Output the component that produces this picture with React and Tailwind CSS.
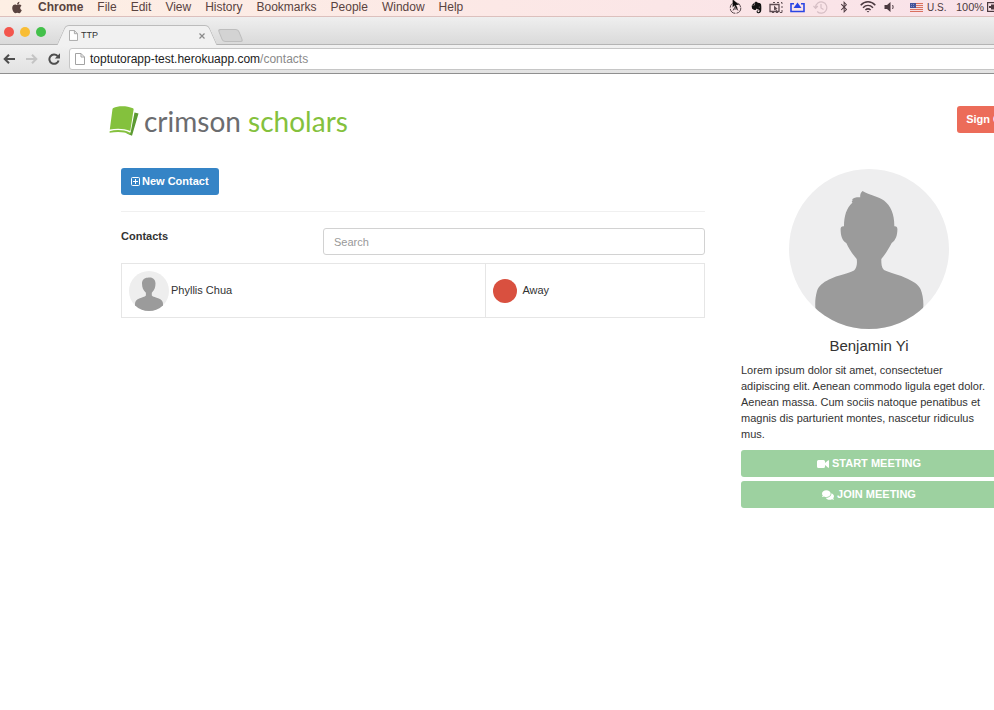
import React from "react";
import { FaApple, FaBluetoothB, FaComments, FaEvernote } from "react-icons/fa";

const menus = ["File", "Edit", "View", "History", "Bookmarks", "People", "Window", "Help"];

function FlagIcon() {
  return (
    <svg viewBox="0 0 13 9" className="h-[9px] w-[13px]" aria-hidden="true">
      <rect width="13" height="9" fill="#f4dfe2" />
      <path d="M0 .5h13M0 2.5h13M0 4.5h13M0 6.5h13M0 8.5h13" stroke="#d9705f" />
      <rect width="6" height="5" fill="#45549a" />
      <path d="M1 1.5h4M1 3.5h4" stroke="#8790c0" strokeDasharray="1 1" />
    </svg>
  );
}

function StatusIcons() {
  return (
    <div className="-mr-[9px] ml-auto flex shrink-0 items-center text-[#4c3a40]">
      <div className="relative mr-2 h-[13px] w-[13px]">
        <svg viewBox="0 0 13 13" className="h-[13px] w-[13px]" fill="none" stroke="#57474c" aria-hidden="true">
          <circle cx="6.5" cy="7" r="5.3" strokeDasharray="7 1.3" />
          <path d="M4 9.5 6.5 5 9 9.500M5 8h3" />
        </svg>
        <svg viewBox="0 0 8 11" className="absolute -top-[2px] left-[3px] h-[11px] w-2" aria-hidden="true">
          <path d="M.5 0v8.500l2-1.800 1.500 3.500 1.700-.8-1.500-3.300H7.500z" fill="#0b0b0b" stroke="#f8e4e8" strokeWidth=".3" />
        </svg>
      </div>
      <FaEvernote className="mr-[6px] h-[13px] w-[13px] text-[#111]" />
      <svg viewBox="0 0 14 13" className="mr-[7px] h-[13px] w-[14px]" fill="none" stroke="#5d4c52" aria-hidden="true">
        <path d="M4 1.500h2M8 1.500h2M12 1.500h1V3M13 5v2M13 9v2.500h-2M9 11.500H7M5 11.500H3" />
        <path d="M1 3.500h9v7H1z" strokeWidth="1.300" />
        <path d="M5 4.500v5l1.200-1.100 1 1.900.9-.4-1-1.900h1.600z" fill="#5d4c52" stroke="none" />
      </svg>
      <svg viewBox="0 0 15 12" className="mr-2 h-3 w-[15px]" aria-hidden="true">
        <path d="M4 2.800H1v7.700h13V2.800h-3" fill="none" stroke="#2b45e4" strokeWidth="1.600" />
        <path d="M7.500 1.500 11.500 7h-8z" fill="#2b45e4" />
      </svg>
      <svg viewBox="0 0 15 13" className="mr-3 h-[13px] w-[15px]" fill="none" stroke="#d6bfc5" strokeWidth="1.200" aria-hidden="true">
        <path d="M2.600 6.500a5.600 5.600 0 1 1 1.600 4M.5 5l2.100 2.300L4.800 5M8 3v4l2.500 1.500" />
      </svg>
      <FaBluetoothB className="mr-3 h-3 w-2" />
      <svg viewBox="0 0 16 12" className="mr-2 h-3 w-4" fill="none" stroke="#4c3a40" strokeWidth="1.500" aria-hidden="true">
        <path d="M.7 4.200C5-.4 11-.4 15.300 4.200M3 6.700c3-3 7-3 10 0M5.400 9c1.700-1.500 3.500-1.500 5.200 0" />
        <path d="m6.700 10 1.300 1.500L9.300 10z" fill="#4c3a40" stroke="none" />
      </svg>
      <svg viewBox="0 0 12 12" className="mr-[14px] h-3 w-3" aria-hidden="true">
        <path d="M.5 4v4H3l3.500 3V1L3 4z" fill="#4c3a40" />
        <path d="M8.500 4c.8 1.200.8 2.800 0 4" fill="none" stroke="#4c3a40" />
      </svg>
      <FlagIcon />
      <span className="ml-1 w-[29px] text-[10px]">U.S.</span>
      <span className="w-[31px] text-[11px]">100%</span>
      <svg viewBox="0 0 16 10" className="h-[10px] w-4" aria-hidden="true">
        <rect x=".6" y=".6" width="14" height="8.800" fill="none" stroke="#4c3a40" strokeWidth="1.200" />
        <path d="M2 4h2V2.500h3v5H4V6H2z" fill="#4c3a40" />
      </svg>
    </div>
  );
}

function PageIcon({ className }) {
  return (
    <svg viewBox="0 0 10 12" className={className} fill="#fff" stroke="#a3a3a3" aria-hidden="true">
      <path d="M.5.5h5.500l3.500 3.500v7.500h-9zM6 .5V4h3.500" />
    </svg>
  );
}

function MenuBar() {
  return (
    <nav className="flex h-[17px] items-center overflow-hidden border-b border-[#dcc0bd] bg-linear-to-r from-[#fdefe4] via-[#fce8e6] to-[#f9e2e9] pb-[2px] pl-[11px] text-[12px] text-[#59433f]">
      <FaApple className="mr-[15px] h-[13px] w-3 shrink-0" />
      <div className="flex gap-[14px]">
        <span className="font-bold">Chrome</span>
        {menus.map((m) => (
          <span key={m}>{m}</span>
        ))}
      </div>
      <StatusIcons />
    </nav>
  );
}

function TabStrip() {
  return (
    <div className="flex h-7 items-end border-b border-[#b4b4b4] bg-linear-to-b from-[#efefef] to-[#dadada] pl-1">
      <div className="flex gap-[6px] self-start pt-[10px]">
        <span className="h-[10px] w-[10px] rounded-full bg-[#f3564d]" />
        <span className="h-[10px] w-[10px] rounded-full bg-[#f8bd35]" />
        <span className="h-[10px] w-[10px] rounded-full bg-[#43c04a]" />
      </div>
      <div className="relative -mb-px ml-[15px] flex h-5 w-[152px] px-2 before:absolute before:inset-y-0 before:left-0 before:w-1/2 before:-skew-x-[24deg] before:rounded-tl-[4px] before:border-t before:border-l before:border-[#bcbcbc] before:bg-[#f1f1f1] after:absolute after:inset-y-0 after:right-0 after:w-1/2 after:skew-x-[24deg] after:rounded-tr-[4px] after:border-t after:border-r after:border-[#bcbcbc] after:bg-[#f1f1f1]">
        <div className="relative z-10 flex flex-1 items-center border-t border-[#bcbcbc] bg-[#f1f1f1]">
          <PageIcon className="h-[11px] w-[9px]" />
          <span className="ml-[3px] text-[9px] text-[#333]">TTP</span>
          <button type="button" aria-label="Close tab" className="ml-auto">
            <svg viewBox="0 0 6 6" className="h-[6px] w-[6px]" stroke="#8a8a8a" strokeWidth="1.200" aria-hidden="true">
              <path d="m.5.5 5 5M5.500.5l-5 5" />
            </svg>
          </button>
        </div>
      </div>
      <button
        type="button"
        aria-label="New tab"
        className="mb-[2px] ml-[7px] h-[13px] w-[21px] skew-x-[22deg] rounded-[3px] border border-[#bdbdbd] bg-[#d3d3d3]"
      />
    </div>
  );
}

function Toolbar() {
  return (
    <div className="flex h-[29px] items-center overflow-hidden border-b border-[#8f8f8f] bg-linear-to-b from-[#f1f1f1] to-[#e2e2e2] pl-[3px]">
      <button type="button" aria-label="Back">
        <svg viewBox="0 0 12 10" className="h-[10px] w-3" fill="none" stroke="#4e4e4e" strokeWidth="2" aria-hidden="true">
          <path d="M12 5H2M6 .8 1.700 5 6 9.200" />
        </svg>
      </button>
      <button type="button" aria-label="Forward" className="ml-[11px]">
        <svg viewBox="0 0 12 10" className="h-[10px] w-3" fill="none" stroke="#c4c4c4" strokeWidth="2" aria-hidden="true">
          <path d="M0 5h10M6 .8 10.300 5 6 9.200" />
        </svg>
      </button>
      <button type="button" aria-label="Reload" className="ml-[10px]">
        <svg viewBox="0 0 12 12" className="h-3 w-3" aria-hidden="true">
          <path d="M9.600 3A4.700 4.700 0 1 0 10.600 7.500" fill="none" stroke="#4e4e4e" strokeWidth="2" />
          <path d="M12 .3v5.200H6.800z" fill="#4e4e4e" />
        </svg>
      </button>
      <div className="-mr-1 ml-[9px] flex h-[22px] flex-1 items-center rounded-[3px] border border-[#c6c6c6] bg-white pl-[5px]">
        <PageIcon className="h-3 w-[10px]" />
        <span className="ml-[5px] text-[12px] text-[#8a8a8a]">
          <span className="text-[#222]">toptutorapp-test.herokuapp.com</span>/contacts
        </span>
      </div>
    </div>
  );
}

function Logo() {
  return (
    <a href="#home" className="flex items-center" aria-label="crimson scholars">
      <svg viewBox="0 0 30 30" className="h-[30px] w-[30px]" aria-hidden="true">
        <path d="M25.500 6.500 29.500 7.500 23 29.800 17 27.300 21.500 27z" fill="#5c9a33" />
        <path d="M4.300 1.900C9-.3 18-.4 24 2.300c.5.3.7.7.6 1.200L21.300 25C15 22.300 7 22.300.8 23.600L3.500 3c.1-.6.300-.9.800-1.100z" fill="#84c13d" />
        <path d="M.6 25.200c6.500-1.700 14-1.500 20 1.200l1.400-.5-1 2.500C15 25.500 8 25.500.6 26.700z" fill="#84c13d" />
      </svg>
      <span className="ml-[5px] font-['Lato',sans-serif] text-[28px] leading-[30px] font-normal whitespace-nowrap text-[#6b6c6f]">
        crimson <span className="text-[#84c13d]">scholars</span>
      </span>
    </a>
  );
}

function SmallAvatar() {
  return (
    <svg viewBox="0 0 40 40" className="h-10 w-10 shrink-0" role="img" aria-label="Phyllis Chua">
      <defs>
        <clipPath id="small-round"><circle cx="20" cy="20" r="20" /></clipPath>
      </defs>
      <g clipPath="url(#small-round)">
        <rect width="40" height="40" fill="#eeeeee" />
        <path d="M18.500 6.800c4.500-1.400 8 1.200 8 5.700 0 4-1.200 6.800-3.700 9.300v2.700c1.200 1.500 4 1.700 7 2.900 3 1.200 4.200 3 4.200 5.300v7.300H6v-7.300c0-2.300 1.200-4.100 4.200-5.300 3-1.200 5.500-1.400 6.700-2.900v-2.700c-2.700-2.500-3.900-5.300-3.900-9.300 0-3 2-5.700 5.500-5.700z" fill="#9b9b9b" />
      </g>
    </svg>
  );
}

function ProfileAvatar() {
  return (
    <svg viewBox="0 0 160 160" className="h-40 w-40" role="img" aria-label="Benjamin Yi">
      <defs>
        <clipPath id="large-round"><circle cx="80" cy="80" r="80" /></clipPath>
      </defs>
      <g clipPath="url(#large-round)">
        <rect width="160" height="160" fill="#eeeeef" />
        <path
          d="M73.500 22C71.500 24 71 26 71.200 28.200C68 28 64.500 28.500 63 30.500L64 31C62.500 32 62.500 33 63.500 33.500C57.500 39 55 47 55 57.200C52.500 57 51.500 58 51.600 60.500C51.700 66 53 72 57.300 74C60 80 63.500 85 67.700 90C68.500 95 67.500 99 65 101.500C60 104.500 49 106 40 110.500C34 113.500 29.500 117 28 122C26 129 26 135 26.500 141V160H134V141C135 134 134 126 131.500 120C129 115 124 112.500 119 110C110 105.500 101 104 95 101C92.500 98.500 92.300 95 92.300 90C96.500 85 99.500 80 102.700 74C107 71 108.300 66 108.400 60.500C108.500 58 107.500 57 105.300 57.200C105.500 46 102 37 95 31.500C88.500 27 81 26.500 73.500 22Z"
          fill="#9b9b9b"
        />
      </g>
    </svg>
  );
}

function ContactsPanel() {
  return (
    <section>
      <button type="button" className="flex h-[27px] items-center rounded-[3px] bg-[#3584c6] px-[10px] text-[11px] font-bold text-white">
        <svg viewBox="0 0 9 9" className="mr-[2px] h-[9px] w-[9px]" fill="none" stroke="#fff" aria-hidden="true">
          <rect x=".5" y=".5" width="8" height="8" rx="1" />
          <path d="M4.500 2v5M2 4.500h5" />
        </svg>
        New Contact
      </button>
      <hr className="mt-4 border-[#f0f0f0]" />
      <div className="mt-4 grid grid-cols-[202px_1fr]">
        <label htmlFor="search" className="font-bold leading-4">Contacts</label>
        <input
          id="search"
          type="text"
          placeholder="Search"
          className="h-[27px] w-full rounded-[3px] border border-[#d2d2d2] px-[10px] text-[11px] placeholder:text-[#999]"
        />
      </div>
      <table className="mt-2 w-full table-fixed border-collapse border border-[#e6e6e6]">
        <tbody>
          <tr className="h-[54px]">
            <td className="w-5/8 border border-[#e6e6e6] py-[6px] pl-[7px]">
              <div className="flex items-center gap-[2px]">
                <SmallAvatar />
                Phyllis Chua
              </div>
            </td>
            <td className="border border-[#e6e6e6] pl-[7px]">
              <div className="flex items-center gap-[5px]">
                <span className="h-6 w-6 rounded-full bg-[#d9503f]" />
                Away
              </div>
            </td>
          </tr>
        </tbody>
      </table>
    </section>
  );
}

function Profile() {
  return (
    <aside>
      <div className="flex justify-center pt-px">
        <ProfileAvatar />
      </div>
      <h2 className="mt-[7px] text-center text-[15px] leading-5 font-medium">Benjamin Yi</h2>
      <p className="mt-[6px] pr-[5px] leading-4">
        Lorem ipsum dolor sit amet, consectetuer adipiscing elit. Aenean commodo ligula eget dolor. Aenean massa. Cum
        sociis natoque penatibus et magnis dis parturient montes, nascetur ridiculus mus.
      </p>
      <div className="mt-2 flex flex-col gap-1">
        <button type="button" className="flex h-[27px] items-center justify-center gap-[3px] rounded-[3px] bg-[#9dd1a0] font-bold text-white">
          <svg viewBox="0 0 12 8" className="h-2 w-3" fill="#fff" aria-hidden="true">
            <path d="M1.500 0h5A1.500 1.500 0 0 1 8 1.500V3l3.200-2.700q.8-.4.800.5v6.400q0 .9-.8.5L8 5v1.500A1.500 1.500 0 0 1 6.500 8h-5A1.500 1.500 0 0 1 0 6.500v-5A1.500 1.500 0 0 1 1.500 0z" />
          </svg>
          START MEETING
        </button>
        <button type="button" className="flex h-[27px] items-center justify-center gap-[3px] rounded-[3px] bg-[#9dd1a0] font-bold text-white">
          <FaComments className="h-3 w-3" />
          JOIN MEETING
        </button>
      </div>
    </aside>
  );
}

export default function App() {
  return (
    <div className="min-h-screen overflow-x-hidden bg-white font-['Liberation_Sans',Arial,sans-serif] text-[11px] text-[#333]">
      <MenuBar />
      <TabStrip />
      <Toolbar />
      <header className="-mr-[27px] flex h-[59px] items-start justify-between pt-8 pl-[109px]">
        <Logo />
        <button type="button" className="h-[27px] rounded-[3px] bg-[#ec6c59] px-[9px] font-bold whitespace-nowrap text-white">
          Sign Out
        </button>
      </header>
      <main className="-mr-[3px] grid grid-cols-[1fr_256px] gap-9 pt-[35px] pl-[121px]">
        <ContactsPanel />
        <Profile />
      </main>
    </div>
  );
}
